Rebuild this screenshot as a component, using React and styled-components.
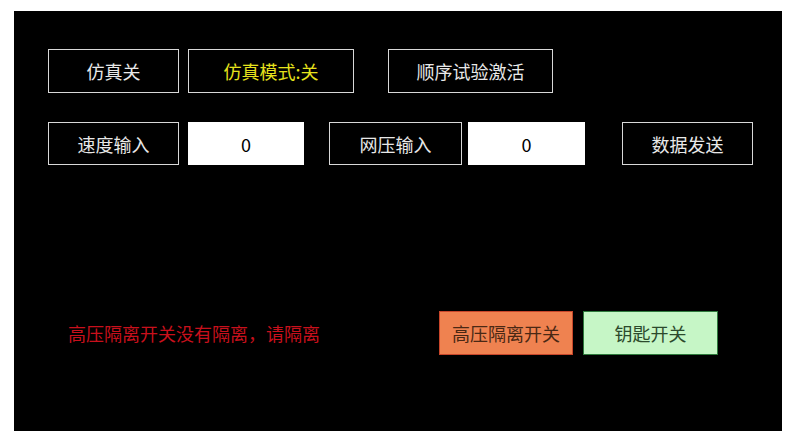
import React from 'react';
import styled, { createGlobalStyle } from 'styled-components';

const GlobalStyle = createGlobalStyle`
  html, body {
    margin: 0;
    padding: 0;
    background: #ffffff;
    overflow: hidden;
  }
  body {
    font-family: "Noto Sans CJK SC", "Noto Sans", sans-serif;
  }
`;

export default function App() {
  return (
    <>
      <GlobalStyle />
      <Panel>
        <Row>
          <Button $w={131}>仿真关</Button>
          <Button $w={166} $ml={9} $color="#e6e21c">
            仿真模式:关
          </Button>
          <Button $w={165} $ml={34}>顺序试验激活</Button>
        </Row>

        <Row $mt={29} $h={43}>
          <Button $w={131}>速度输入</Button>
          <Field $w={116} $ml={9} value="0" readOnly />
          <Button $w={133} $ml={25}>网压输入</Button>
          <Field $w={117} $ml={6} value="0" readOnly />
          <Button $w={131} $ml={37}>数据发送</Button>
        </Row>

        <Row $mt={146}>
          <Warning>高压隔离开关没有隔离，请隔离</Warning>
          <Switch $w={134} $bg="#ef8250" $border="#c8462a" $color="#4a2814">
            高压隔离开关
          </Switch>
          <Switch
            $w={135}
            $ml={10}
            $bg="#c6f6c6"
            $border="#2e7a3c"
            $color="#2c4a2c"
          >
            钥匙开关
          </Switch>
        </Row>
      </Panel>
    </>
  );
}

const Panel = styled.div`
  box-sizing: border-box;
  margin: 11px 0 0 14px;
  width: 768px;
  height: 420px;
  background: #000000;
  padding: 38px 0 0 34px;
`;

const Row = styled.div`
  display: flex;
  align-items: stretch;
  height: ${(p) => p.$h || 44}px;
  margin-top: ${(p) => p.$mt || 0}px;
`;

const Button = styled.div`
  box-sizing: border-box;
  width: ${(p) => p.$w}px;
  margin-left: ${(p) => p.$ml || 0}px;
  display: flex;
  align-items: center;
  justify-content: center;
  border: 1px solid #d8d8d8;
  color: ${(p) => p.$color || '#e8e8e8'};
  font-size: 18px;
  line-height: 1;
`;

const Field = styled.input`
  box-sizing: border-box;
  width: ${(p) => p.$w}px;
  margin: 0 0 0 ${(p) => p.$ml || 0}px;
  padding: 0;
  border: none;
  outline: none;
  background: #ffffff;
  color: #000000;
  text-align: center;
  font-family: "Noto Sans CJK SC", "Noto Sans", sans-serif;
  font-size: 18px;
`;

const Warning = styled.div`
  box-sizing: border-box;
  width: 391px;
  padding-left: 20px;
  display: flex;
  align-items: center;
  padding-top: 0;
  color: #c8101c;
  font-size: 18px;
  white-space: nowrap;
`;

const Switch = styled.div`
  box-sizing: border-box;
  width: ${(p) => p.$w}px;
  margin-left: ${(p) => p.$ml || 0}px;
  display: flex;
  align-items: center;
  justify-content: center;
  background: ${(p) => p.$bg};
  border: 1px solid ${(p) => p.$border};
  color: ${(p) => p.$color};
  font-size: 18px;
`;
